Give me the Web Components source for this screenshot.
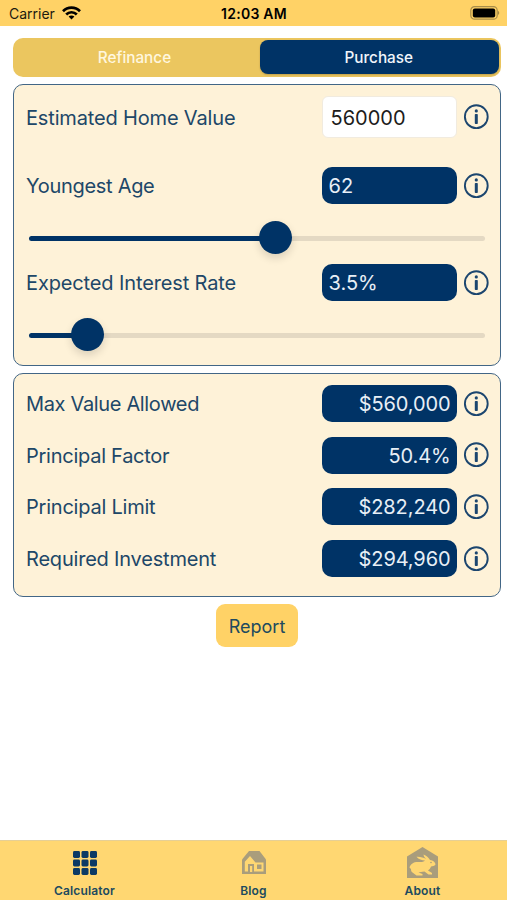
<!DOCTYPE html>
<html lang="en">
<head>
  <meta charset="utf-8">
  <title>Calculator</title>
  <style>
    :root {
      --navy: #003366;
      --ink: #204768;
      --gold: #ffd266;
      --cream: #fef2d8;
    }

    body {
      margin: 0;
      background: #fff;
      font-family: Inter, "Liberation Sans", sans-serif;
      color: var(--ink);
    }
  </style>
</head>
<body>
  <calculator-app></calculator-app>

  <script>
    class StatusBar extends HTMLElement {
      constructor() {
        super();
        this.attachShadow({ mode: 'open' });
        this.shadowRoot.innerHTML = `
          <style>
            :host {
              display: grid;
              grid-template-columns: 1fr auto 1fr;
              align-items: center;
              height: 25.5px;
              box-sizing: border-box;
              padding: 2px 7px 0 9px;
              background: var(--gold);
              color: #1d1a10;
              font-size: 14px;
            }

            .carrier {
              display: flex;
              align-items: center;
              gap: 7px;
            }

            .carrier svg {
              margin-top: -2px;
            }

            .time {
              font-weight: 600;
              font-size: 14px;
              letter-spacing: 0.25px;
              margin-right: 1px;
              color: #000;
            }

            .battery {
              justify-self: end;
              display: block;
              margin-top: -2px;
            }
          </style>
          <div class="carrier">
            <span>Carrier</span>
            <svg width="19" height="14" viewBox="0 0 19 14" fill="none" stroke="#000" stroke-width="2.7">
              <path d="M1 5.2C5.7 .5 13.3 .5 18 5.2M4.2 8.5C7.1 5.5 11.9 5.5 14.8 8.5"/>
              <path d="M6.6 10.6C8.2 9 10.8 9 12.4 10.6L9.5 13.6Z" fill="#000" stroke="none"/>
            </svg>
          </div>
          <div class="time"><slot></slot></div>
          <svg class="battery" width="30" height="14" viewBox="0 0 30 14">
            <rect x=".8" y=".6" width="26.4" height="12.6" rx="3.8" fill="none" stroke="#a88d49" stroke-width="1.2"/>
            <rect x="2.8" y="2.4" width="22.4" height="9" rx="2"/>
            <path d="M28.2 4.8q2 2.1 0 4.2z" fill="#8f7840"/>
          </svg>`
        ;
      }
    }

    class SegmentedControl extends HTMLElement {
      constructor() {
        super();
        this.attachShadow({ mode: 'open' });
        this.shadowRoot.innerHTML = `
          <style>
            :host {
              display: grid;
              grid-template-columns: 1fr 1fr;
              height: 39px;
              box-sizing: border-box;
              padding: 2px;
              border-radius: 10px;
              background: #ebc65f;
              font-size: 15.3px;
              font-weight: 500;
            }

            ::slotted(*) {
              display: flex;
              align-items: center;
              justify-content: center;
              margin: 0 3px 0 0;
              border-radius: 8px;
              color: #fff7df;
            }

            ::slotted([selected]) {
              margin: 0 0 1px 2.5px;
              padding: 1px 1px 0 0;
              background: var(--navy);
              color: #f0f5fa;
              box-shadow: 0 1px 2px rgba(0, 0, 0, 0.2);
            }
          </style>
          <slot></slot>`
        ;
      }
    }

    class FormCard extends HTMLElement {
      constructor() {
        super();
        this.attachShadow({ mode: 'open' });
        this.shadowRoot.innerHTML = `
          <style>
            :host {
              display: flex;
              flex-direction: column;
              box-sizing: border-box;
              padding: 11px 11px 0 12px;
              border: 1.5px solid #426686;
              border-radius: 10px;
              background: var(--cream);
            }
          </style>
          <slot></slot>`
        ;
      }
    }

    class InfoButton extends HTMLElement {
      constructor() {
        super();
        this.attachShadow({ mode: 'open' });
        this.shadowRoot.innerHTML = `
          <style>
            :host {
              display: block;
              width: 26px;
              height: 26px;
            }

            svg {
              display: block;
            }
          </style>
          <svg width="26" height="26" viewBox="0 0 26 26">
            <circle cx="13.3" cy="12.7" r="11.4" fill="none" stroke="#1c466f" stroke-width="1.9"/>
            <circle cx="13.3" cy="6.9" r="1.6" fill="#1c466f"/>
            <rect x="11.8" y="9.9" width="3" height="10.2" rx=".8" fill="#1c466f"/>
          </svg>`
        ;
      }
    }

    class ValueRow extends HTMLElement {
      constructor() {
        super();
        this.attachShadow({ mode: 'open' });
        this.shadowRoot.innerHTML = `
          <style>
            :host {
              display: grid;
              grid-template-columns: 1fr 135px 26px;
              column-gap: 6.5px;
              align-items: center;
              height: 37px;
              font-size: 20px;
              white-space: nowrap;
            }

            .value {
              display: flex;
              align-items: center;
              height: 100%;
              box-sizing: border-box;
              padding: 1px 6px 0 7px;
              border-radius: 10px;
              background: var(--navy);
              color: #e8eff6;
            }

            .label {
              padding-top: 1px;
              letter-spacing: var(--track, 0);
            }

            :host([output]) .value {
              justify-content: flex-end;
              letter-spacing: -0.1px;
            }

            :host([editable]) {
              height: 42px;
            }

            :host([editable]) .value {
              padding: 1px 8px 0;
              border: 1px solid #f1ebdf;
              border-radius: 6px;
              background: #fff;
              color: #1c1c1c;
            }
          </style>
          <span class="label"><slot></slot></span>
          <span class="value"></span>
          <info-button></info-button>`
        ;
      }

      connectedCallback() {
        this.style.setProperty('--track', this.getAttribute('track') + 'px');
        this.shadowRoot.querySelector('.value').textContent = this.getAttribute('value');
      }
    }

    class RangeSlider extends HTMLElement {
      constructor() {
        super();
        this.attachShadow({ mode: 'open' });
        this.shadowRoot.innerHTML = `
          <style>
            :host {
              display: flex;
              align-items: center;
              height: 60px;
              box-sizing: border-box;
              padding: 6px 4px 0 3px;
            }

            .filled,
            .rest {
              height: 5px;
              border-radius: 3px;
              margin-top: 2px;
            }

            .filled {
              width: var(--filled);
              background: var(--navy);
            }

            .rest {
              flex: 1;
              background: #e4d9c3;
            }

            .thumb {
              width: 33px;
              height: 33px;
              margin: 0 -3px;
              border-radius: 50%;
              background: var(--navy);
              box-shadow: 0 4px 9px rgba(0, 0, 0, 0.14);
              z-index: 1;
            }
          </style>
          <div class="filled"></div>
          <div class="thumb"></div>
          <div class="rest"></div>`
        ;
      }

      connectedCallback() {
        this.style.setProperty('--filled', this.getAttribute('filled') + 'px');
      }
    }

    class TabItem extends HTMLElement {
      constructor() {
        super();
        this.attachShadow({ mode: 'open' });
        this.shadowRoot.innerHTML = `
          <style>
            :host {
              display: flex;
              flex-direction: column;
              align-items: center;
              font-size: 12px;
              font-weight: 600;
              line-height: 16px;
              letter-spacing: 0.15px;
              color: #204a5f;
            }

            .icon {
              display: flex;
              align-items: center;
              height: 34px;
              margin: 5px 0 3px;
            }
          </style>
          <div class="icon"><slot name="icon"></slot></div>
          <slot></slot>`
        ;
      }
    }

    class CalculatorApp extends HTMLElement {
      constructor() {
        super();
        this.attachShadow({ mode: 'open' });
        this.shadowRoot.innerHTML = `
          <style>
            :host {
              display: flex;
              flex-direction: column;
              width: 507px;
              height: 900px;
              overflow: hidden;
            }

            main {
              flex: 1;
              display: flex;
              flex-direction: column;
              padding: 12px 6px 0 13px;
            }

            .inputs {
              height: 282px;
              margin-top: 7.5px;
            }

            .first {
              margin-bottom: 29px;
            }

            .results {
              height: 224px;
              margin-top: 7px;
              gap: 14.7px;
            }

            button {
              align-self: center;
              width: 82px;
              height: 43px;
              margin-top: 7px;
              padding: 1px 0 0;
              border: 0;
              border-radius: 9px;
              background: var(--gold);
              color: #204a5f;
              font: 18px Inter, "Liberation Sans", sans-serif;
            }

            nav {
              display: grid;
              grid-template-columns: repeat(3, 1fr);
              height: 60.5px;
              box-sizing: border-box;
              border-top: 1px solid #e6cf95;
              background: #ffd772;
            }

            svg {
              display: block;
            }
          </style>
          <status-bar>12:03 AM</status-bar>
          <main>
            <segmented-control>
              <span>Refinance</span>
              <span selected>Purchase</span>
            </segmented-control>
            <form-card class="inputs">
              <value-row class="first" editable track="-0.16" value="560000">Estimated Home Value</value-row>
              <value-row track="-0.3" value="62">Youngest Age</value-row>
              <range-slider filled="232.5"></range-slider>
              <value-row track="-0.13" value="3.5%">Expected Interest Rate</value-row>
              <range-slider filled="44.5"></range-slider>
            </form-card>
            <form-card class="results">
              <value-row output track="-0.34" value="$560,000">Max Value Allowed</value-row>
              <value-row output track="-0.26" value="50.4%">Principal Factor</value-row>
              <value-row output track="-0.22" value="$282,240">Principal Limit</value-row>
              <value-row output track="-0.2" value="$294,960">Required Investment</value-row>
            </form-card>
            <button>Report</button>
          </main>
          <nav>
            <tab-item>
              <svg slot="icon" width="24" height="24" viewBox="0 0 24 24" fill="#0c3a65">
                <rect width="7" height="7" rx="1.4"/><rect x="8.5" width="7" height="7" rx="1.4"/><rect x="17" width="7" height="7" rx="1.4"/>
                <rect y="8.5" width="7" height="7" rx="1.4"/><rect x="8.5" y="8.5" width="7" height="7" rx="1.4"/><rect x="17" y="8.5" width="7" height="7" rx="1.4"/>
                <rect y="17" width="7" height="7" rx="1.4"/><rect x="8.5" y="17" width="7" height="7" rx="1.4"/><rect x="17" y="17" width="7" height="7" rx="1.4"/>
              </svg>
              Calculator
            </tab-item>
            <tab-item>
              <svg slot="icon" width="26" height="25" viewBox="0 0 26 25">
                <path d="M8 1H18.5L25 9.5V24H1V9.5Z" fill="#a99d7c"/>
                <path d="M3.8 21.5V11.8L9 6L14.5 12.5H22.5V21.5H13V14H7V21.5Z" fill="#ffd772"/>
                <rect x="9" y="16" width="2.2" height="6" fill="#ffd772"/>
                <rect x="16" y="14.5" width="4.5" height="4.5" fill="#a99d7c"/>
              </svg>
              Blog
            </tab-item>
            <tab-item>
              <svg slot="icon" width="31" height="31" viewBox="0 0 31 31">
                <path d="M15.5 0L31 9.5V31H0V9.5Z" fill="#a99d7c"/>
                <path d="M2.5 20.5C3.5 16.5 7.5 14.5 12 15C14.5 15.2 16.5 15 18 13.5C15 13.5 11.5 12.5 9.5 9.8C13 9.5 16.5 10.5 19 12C17.5 10.3 16.5 9 16.5 7.5C19.5 8.5 21.5 10.5 23 13C26 13.2 28.5 15.5 28.5 17.5C27.5 19.2 25.5 19 24 19.5C23.5 21.5 22 22.5 21 23.5L25 26V27.5H21.5L17.5 24.5C14.5 25 13 25 11.5 25.5L15.5 27V28.5H9.5L5.5 25.5C4 24.5 4 23 4 22Z" fill="#ffd772"/>
                <circle cx="24" cy="15.5" r=".8" fill="#a99d7c"/>
              </svg>
              About
            </tab-item>
          </nav>`
        ;
      }
    }

    // Define the custom elements
    customElements.define('status-bar', StatusBar);
    customElements.define('segmented-control', SegmentedControl);
    customElements.define('form-card', FormCard);
    customElements.define('info-button', InfoButton);
    customElements.define('value-row', ValueRow);
    customElements.define('range-slider', RangeSlider);
    customElements.define('tab-item', TabItem);
    customElements.define('calculator-app', CalculatorApp);
  </script>
</body>
</html>
